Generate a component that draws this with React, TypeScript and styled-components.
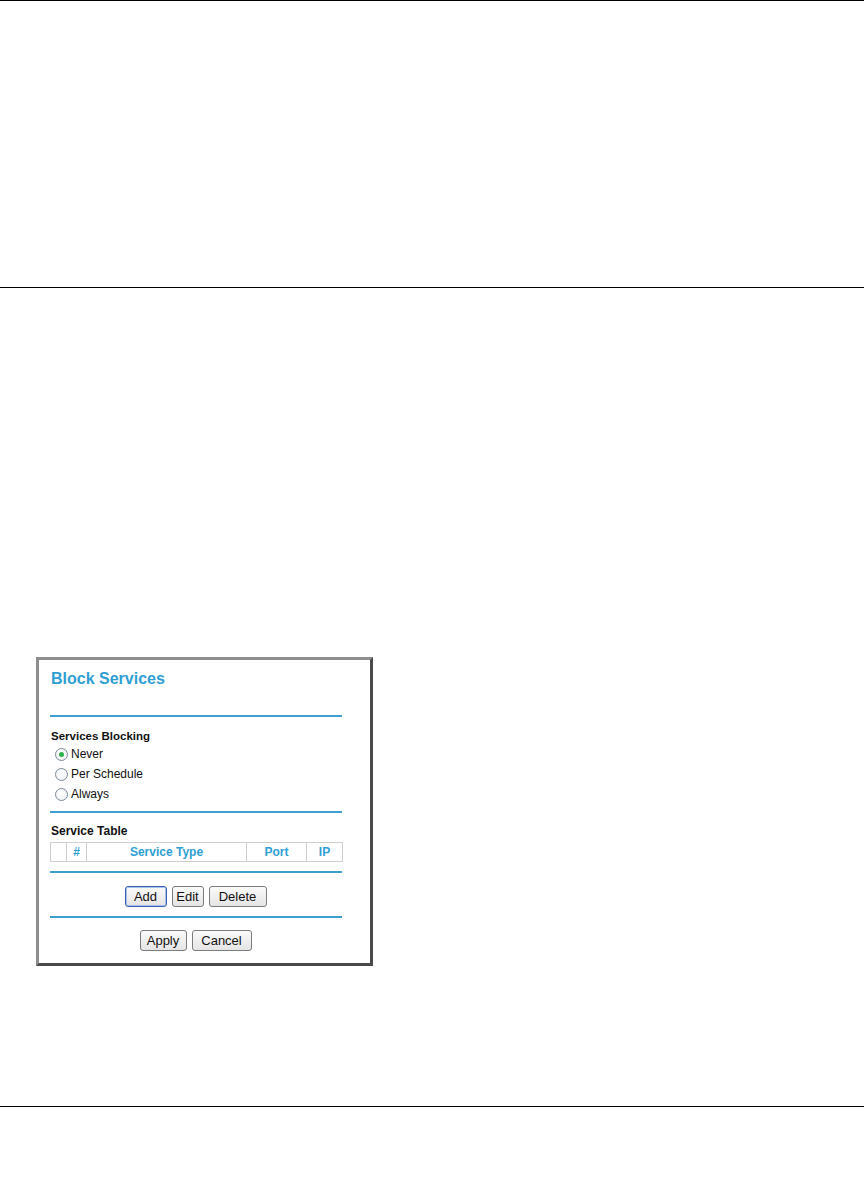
import React from "react";
import styled, { createGlobalStyle } from "styled-components";

const Global = createGlobalStyle`
  html, body { margin: 0; padding: 0; background: #ffffff; }
  body { font-family: "Liberation Sans", Arial, sans-serif; }
`;

const Page = styled.div`
  width: 864px;
  height: 1184px;
  background: #ffffff;
  display: flex;
  flex-direction: column;
`;

const Rule = styled.div`
  height: 1px;
  background: #000000;
  width: 100%;
  flex: none;
`;

const Blank = styled.div<{ $h: number }>`
  height: ${(p) => p.$h}px;
  flex: none;
`;

const FigureArea = styled.div`
  padding: 369px 0 0 36px;
  height: 818px;
  box-sizing: border-box;
  flex: none;
`;

const Dialog = styled.div`
  width: 337px;
  height: 309px;
  box-sizing: border-box;
  border-style: solid;
  border-width: 3px;
  border-color: #8e8e8e #4a4a4a #4a4a4a #8e8e8e;
  background: #ffffff;
  padding: 10px 28px 0 11px;
  display: flex;
  flex-direction: column;
`;

const Title = styled.div`
  font-family: "Liberation Sans", Arial, sans-serif;
  font-weight: bold;
  font-size: 16px;
  line-height: 18px;
  color: #2f9fd3;
  padding-left: 1px;
`;

const BlueLine = styled.div<{ $mt: number }>`
  height: 2px;
  background: #3f9fcf;
  margin-top: ${(p) => p.$mt}px;
  flex: none;
`;

const SectionLabel = styled.div<{ $mt: number; $size: number }>`
  font-weight: bold;
  font-size: ${(p) => p.$size}px;
  line-height: 14px;
  color: #111111;
  margin-top: ${(p) => p.$mt}px;
  padding-left: 1px;
`;

const RadioGroup = styled.div`
  display: flex;
  flex-direction: column;
  margin-top: 1px;
  padding-left: 5px;
`;

const RadioRow = styled.label`
  display: flex;
  align-items: center;
  height: 20px;
  gap: 3px;
  font-size: 12px;
  color: #111111;
`;

const RadioDot = styled.span<{ $on?: boolean }>`
  width: 11px;
  height: 11px;
  border-radius: 50%;
  border: 1px solid #7c8a99;
  background: radial-gradient(circle at 40% 35%, #ffffff 0%, #e9ecef 100%);
  display: flex;
  align-items: center;
  justify-content: center;
  flex: none;
  &::after {
    content: "";
    display: ${(p) => (p.$on ? "block" : "none")};
    width: 5px;
    height: 5px;
    border-radius: 50%;
    background: #2fb04a;
  }
`;

const Table = styled.table`
  margin-top: 4px;
  width: 292px;
  border-collapse: collapse;
  border: 1px solid #bdbdbd;
  table-layout: fixed;
`;

const Th = styled.th<{ $w: number }>`
  width: ${(p) => p.$w}px;
  height: 19px;
  padding: 0;
  border: 1px solid #cfcfcf;
  font-size: 12px;
  font-weight: bold;
  color: #2f9fd3;
  text-align: center;
  box-sizing: border-box;
`;

const ButtonRow = styled.div<{ $mt: number }>`
  display: flex;
  justify-content: center;
  gap: 5px;
  margin-top: ${(p) => p.$mt}px;
  padding-right: 1px;
`;

const Button = styled.button<{ $focus?: boolean; $w: number }>`
  font-family: "Liberation Sans", Arial, sans-serif;
  font-size: 13px;
  color: #111111;
  width: ${(p) => p.$w}px;
  height: 21px;
  padding: 0;
  border-radius: 3px;
  border: 1px solid ${(p) => (p.$focus ? "#3a5fb0" : "#7d7d7d")};
  box-shadow: ${(p) => (p.$focus ? "inset 0 0 0 1px #a9c1ee" : "none")};
  background: linear-gradient(#fbfbfb, #e4e4e4);
  cursor: pointer;
`;

export default function App() {
  return (
    <Page>
      <Global />
      <Rule />
      <Blank $h={286} />
      <Rule />
      <FigureArea>
        <Dialog>
          <Title>Block Services</Title>
          <BlueLine $mt={27} />
          <SectionLabel $mt={12} $size={11.5}>Services Blocking</SectionLabel>
          <RadioGroup>
            <RadioRow>
              <RadioDot $on />
              Never
            </RadioRow>
            <RadioRow>
              <RadioDot />
              Per Schedule
            </RadioRow>
            <RadioRow>
              <RadioDot />
              Always
            </RadioRow>
          </RadioGroup>
          <BlueLine $mt={7} />
          <SectionLabel $mt={11} $size={12}>Service Table</SectionLabel>
          <Table>
            <thead>
              <tr>
                <Th $w={16}></Th>
                <Th $w={20}>#</Th>
                <Th $w={160}>Service Type</Th>
                <Th $w={60}>Port</Th>
                <Th $w={36}>IP</Th>
              </tr>
            </thead>
          </Table>
          <BlueLine $mt={9} />
          <ButtonRow $mt={13}>
            <Button $focus $w={42}>Add</Button>
            <Button $w={32}>Edit</Button>
            <Button $w={58}>Delete</Button>
          </ButtonRow>
          <BlueLine $mt={9} />
          <ButtonRow $mt={12}>
            <Button $w={47}>Apply</Button>
            <Button $w={60}>Cancel</Button>
          </ButtonRow>
        </Dialog>
      </FigureArea>
      <Rule />
    </Page>
  );
}
